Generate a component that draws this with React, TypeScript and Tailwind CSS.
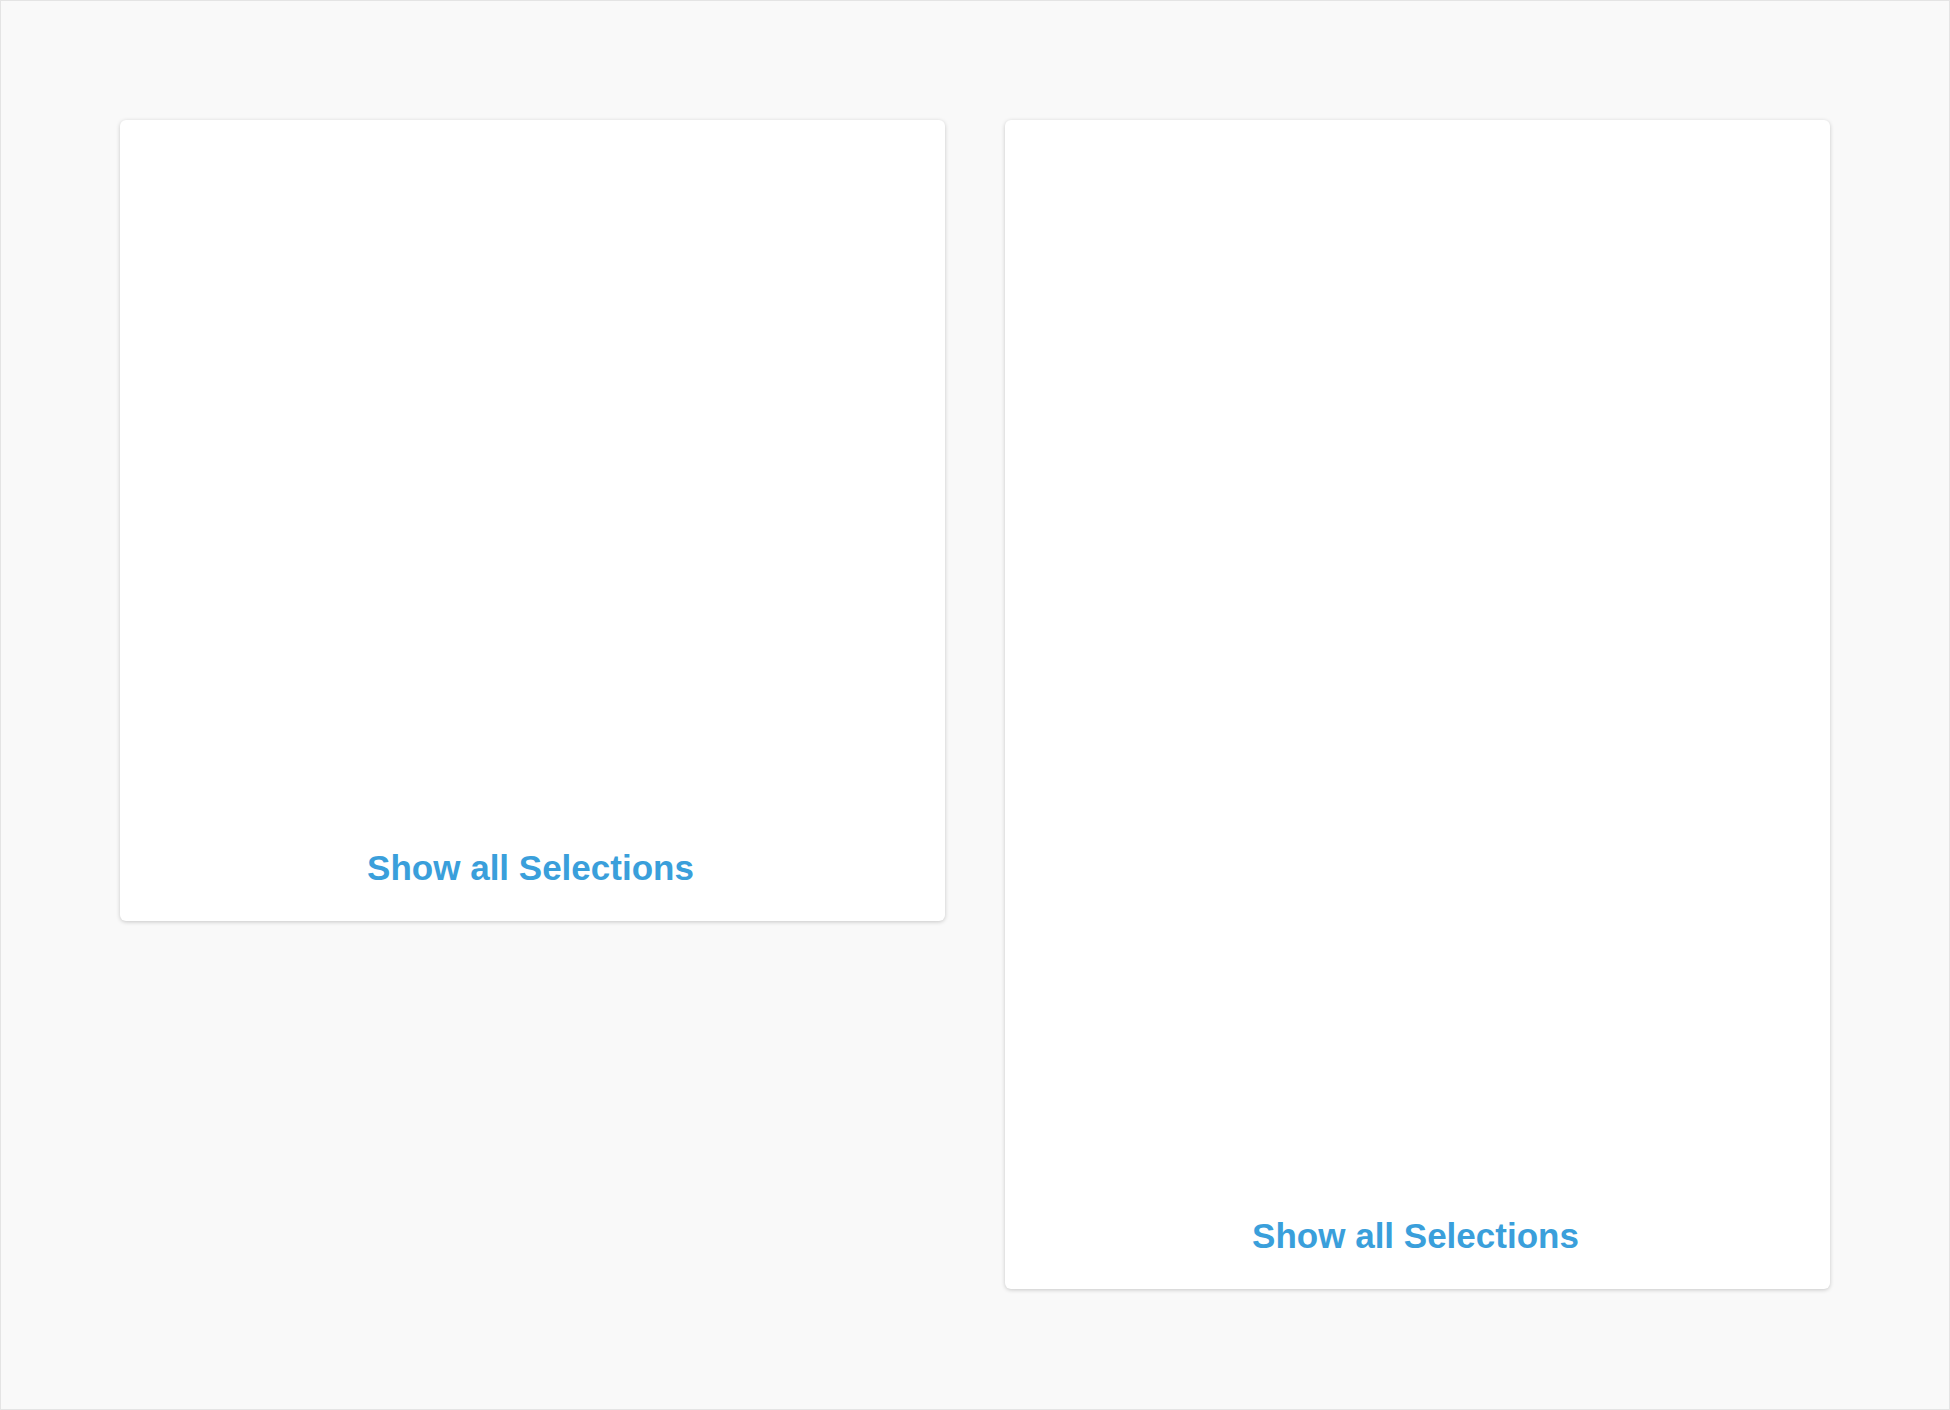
function SelectionCard({ height }: { height: string }) {
  return (
    <div className={`flex w-[825px] flex-col rounded-md bg-white shadow-[0_1px_4px_rgba(0,0,0,0.2)] ${height}`}>
      <div className="flex-1" />
      <div className="flex justify-center pb-[33px] pr-[4px]">
        <a href="#" className="text-[35px] leading-[40px] font-bold text-[#3a9fdb]">
          Show all Selections
        </a>
      </div>
    </div>
  );
}

export default function App() {
  return (
    <div className="h-screen w-full border border-[#e4e4e4] bg-[#f9f9f9] font-['Liberation_Sans',Arial,sans-serif]">
      <div className="flex items-start gap-[60px] pt-[119px] pl-[119px]">
        <SelectionCard height="h-[801px]" />
        <SelectionCard height="h-[1169px]" />
      </div>
    </div>
  );
}
